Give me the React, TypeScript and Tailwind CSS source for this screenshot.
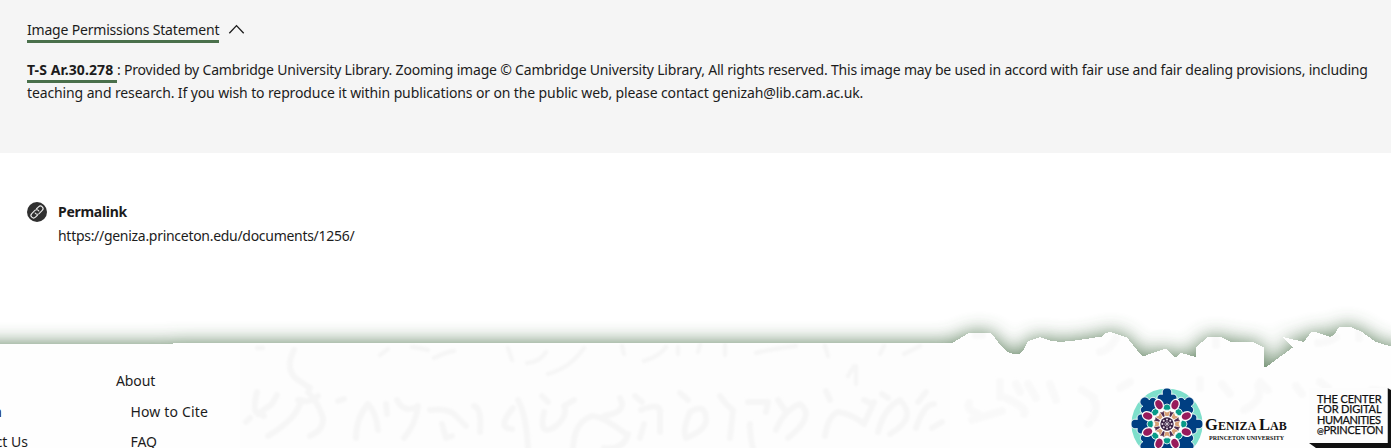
const EDGE =
  'M-40 344H173V343H952L969 333H991L1002 347L1008 352L1012 353.5H1020L1023 351L1028 341L1040 337L1050 340.5L1060 342L1075 340.5L1102 336.5L1106 333L1110 332L1127 337.5L1141 355L1143 356.7L1147 355L1164 349H1166L1174 356.5H1177L1181 353L1196 357V347L1208 337H1221L1231 342H1253L1263.5 347V367L1267 366.5L1292 348L1293 347L1283 338V337L1304 342L1311 332H1316L1330 337L1334 335L1339 327H1351L1362 332L1376 342L1391 346.5L1440 350V520H-40Z'

const STROKES = [
  'M294 350Q284 370 298 380L310 388M308 392Q318 402 323 418Q324 430 310 436',
  'M257 392Q253 408 256 412L264 416M277 395L272 404L258 414M246 422L250 418M301 400Q298 418 268 436',
  'M298 400Q310 404 318 396M338 401L344 399M356 438Q356 418 368 404Q376 412 378 430M386 404L387 414M397 400Q404 414 418 406M418 406Q416 424 404 438M430 410Q446 408 454 414L466 426M442 424L446 438L452 436',
  'M474 406Q482 408 480 432M518 400Q526 414 528 448M513 408Q496 428 512 429M542 396L548 402M544 412Q538 438 556 426Q568 416 564 406L574 400M573 448Q574 422 592 416Q602 416 626 434M620 398Q628 412 604 416M628 434Q624 450 604 448',
  'M635 396L642 402M641 410Q660 402 660 412V432M644 424L640 438M680 393L688 400M690 412Q682 430 686 438M690 412Q706 402 706 420Q706 430 686 438M720 396L726 404L733 410L730 438M748 402L768 402L766 412M750 424Q750 438 753 448',
  'M778 400L786 412M776 430Q784 410 800 404Q816 416 788 438M826 391L830 400M825 436Q828 416 838 412Q852 414 864 424L874 402M864 400L872 404M882 394L888 398M878 432Q884 408 900 400Q918 418 890 434M918 402L926 392M916 428Q924 404 934 404M932 428L942 422',
]

const SMALL = [
  'M527 363Q540 362 546 352M548 374Q570 368 584 348M644 361Q660 356 666 347M756 353Q770 349 796 346M825 346L828 356M884 346L880 354M904 354L920 346M380 355L388 349M412 347Q420 348 428 350M434 358Q446 352 454 351M508 348L512 360M622 346L624 354M678 347V354M700 345L698 352M725 345V355M848 376L854 366M856 366V384M257 348H263',
]

const FAINT = [
  'M969 403Q966 410 978 414M1000 382V397M1016 384L1020 392M1006 398Q1028 408 1024 414M972 420L1002 411M1028 384L1036 398M1050 384L1056 400M1082 390L1094 398M1088 424Q1100 412 1094 400',
  'M1222 384L1230 394M1258 386Q1264 400 1244 410M1260 382L1268 390M1296 386L1302 394M1320 382L1328 388M1372 390L1390 392M1130 382L1120 388M1200 380V388',
  'M1100 352Q1110 350 1116 338M1216 340V345M1318 343Q1330 342 1336 337M1359 333V338M976 335H982',
]

const EIGHT = [0, 45, 90, 135, 180, 225, 270, 315]

function TornEdge() {
  return (
    <svg className="pointer-events-none absolute left-0 top-0" width="1391" height="148" viewBox="0 300 1391 148" overflow="visible" aria-hidden="true">
      <defs>
        <filter id="glow" x="-5%" y="-30%" width="110%" height="160%" filterUnits="objectBoundingBox">
          <feGaussianBlur stdDeviation="10" />
        </filter>
        <filter id="ink"><feGaussianBlur stdDeviation="1" /></filter>
        <clipPath id="paper"><path d={EDGE} /></clipPath>
      </defs>
      <path d={EDGE} fill="#4a704a" opacity="0.88" filter="url(#glow)" />
      <path d={EDGE} fill="#fefefe" shapeRendering="crispEdges" />
      <g clipPath="url(#paper)">
        <path d="M240 345H950V448H240Z" fill="#fdfdfd" />
        <g fill="none" stroke="#f6f6f6" strokeWidth="6" strokeLinecap="round" strokeLinejoin="round" filter="url(#ink)">
          {STROKES.map((d) => <path key={d} d={d} />)}
          {SMALL.map((d) => <path key={d} d={d} strokeWidth="4.5" />)}
          {FAINT.map((d) => <path key={d} d={d} stroke="#f9f9f9" strokeWidth="8" />)}
        </g>
      </g>
    </svg>
  )
}

function Rosette() {
  return (
    <svg className="shrink-0" width="74" height="74" viewBox="-37 -37 74 74" aria-hidden="true">
      <circle r="35.6" fill="#7edfcb" />
      {EIGHT.map((a) => (
        <path
          key={a}
          transform={`rotate(${a})`}
          d="M0 -36C3.4 -36 5.4 -33.6 4.6 -29.6C7.6 -30.6 10 -28.6 10 -26C10 -23.6 8.4 -22.6 7.8 -21L6 -13H-6L-7.8 -21C-8.4 -22.6 -10 -23.6 -10 -26C-10 -28.6 -7.6 -30.6 -4.6 -29.6C-5.4 -33.6 -3.4 -36 0 -36Z"
          fill="#003f82"
          stroke="#fff"
          strokeWidth="0.9"
        />
      ))}
      <circle r="16.5" fill="#fff" />
      {EIGHT.map((a) => (
        <g key={a} transform={`rotate(${a})`}>
          <path d="M-4 -15.5L-2.8 -19Q0 -21 2.8 -19L4 -15.5L2 -13.8H-2Z" fill="#079b88" stroke="#fff" strokeWidth=".8" />
          <path d="M-3.2 -13L-1.6 -8H1.6L3.2 -13L0 -11.6Z" fill="#d8a279" />
        </g>
      ))}
      {EIGHT.map((a) => (
        <g key={a} transform={`rotate(${a + 22.5})`}>
          <ellipse cy="-20.9" rx="4.1" ry="5.4" fill="#981b5c" stroke="#fff" strokeWidth="1.3" />
          <path d="M-1.8 -13.6L0 -12.4L1.8 -13.6L.8 -8H-.8Z" fill="#512b4d" />
        </g>
      ))}
      <circle r="6.7" fill="#3b2345" />
      {EIGHT.map((a) => <circle key={a} transform={`rotate(${a})`} cy="-4.6" r="1" fill="#e8dbe6" />)}
      <path d="M0 -3V3M-3 0H3M-2 -2L2 2M2 -2L-2 2" stroke="#f0e7ee" strokeWidth=".6" />
    </svg>
  )
}

export default function App() {
  return (
    <div className="flex h-[448px] w-[1391px] flex-col overflow-hidden bg-white font-['Noto_Sans',sans-serif] text-[14px] text-[#1c1c1c]">
      <section className="relative z-10 h-[153px] bg-[#f5f5f5] pl-[27px] pt-[19px]">
        <div className="flex h-[24px] items-start">
          <span className="h-[24px] w-[192px] whitespace-nowrap border-b-3 border-[#4a704b] leading-[22px] tracking-[-0.19px]">Image Permissions Statement</span>
          <svg className="ml-[9px] mt-[5px]" width="17" height="11" viewBox="0 0 17 11" fill="none" stroke="#1c1c1c" strokeWidth="1.3">
            <path d="M1.3 9.2L8.5 1.6L15.7 9.2" />
          </svg>
        </div>
        <p className="mt-[16px] whitespace-nowrap leading-[22px]">
          <span className="inline-block h-[24px] w-[90px] border-b-3 border-[#4a704b] align-top font-bold tracking-[0.1px]">T-S Ar.30.278</span>
          <span className="inline-block align-top tracking-[-0.187px]">: Provided by Cambridge University Library. Zooming image © Cambridge University Library, All rights reserved. This image may be used in accord with fair use and fair dealing provisions, including</span>
        </p>
        <p className="-mt-[2px] whitespace-nowrap leading-[23px] tracking-[-0.118px]">teaching and research. If you wish to reproduce it within publications or on the public web, please contact genizah@lib.cam.ac.uk.</p>
      </section>

      <section className="relative z-10 flex h-[147px] shrink-0 gap-[11px] pl-[27px] pt-[47px]">
        <svg className="mt-[2px]" width="20" height="20" viewBox="0 0 20 20" fill="none">
          <circle cx="10" cy="10" r="10" fill="#303030" />
          <g stroke="#ededed" strokeWidth="1.1" strokeLinecap="round" transform="rotate(-45 10 10)">
            <path d="M8 12.6H5.2a2.6 2.6 0 0 1 0-5.2H9.6a2.6 2.6 0 0 1 2.4 3.2" />
            <path d="M12 7.4H14.8a2.6 2.6 0 0 1 0 5.2H10.4a2.6 2.6 0 0 1-2.4-3.2" />
          </g>
        </svg>
        <div className="whitespace-nowrap leading-[24px]">
          <h2 className="font-bold tracking-[-0.28px]">Permalink</h2>
          <p className="tracking-[-0.29px]">https://geniza.princeton.edu/documents/1256/</p>
        </div>
      </section>

      <footer className="relative h-[148px] shrink-0">
        <TornEdge />
        <div className="relative flex h-full items-start">
          <div className="flex w-[116px] flex-col pt-[97px] leading-[30px]">
            <span className="flex w-[2px] justify-end whitespace-nowrap">Search</span>
            <span className="flex w-[28px] justify-end whitespace-nowrap">Contact Us</span>
          </div>
          <nav className="w-[1014px] whitespace-nowrap pt-[66px] leading-[30px]">
            <h3 className="tracking-[-0.1px]">About</h3>
            <ul className="pl-[14.5px] pt-px">
              <li className="tracking-[0.15px]">How to Cite</li>
              <li className="tracking-[-0.1px]">FAQ</li>
            </ul>
          </nav>
          <div className="flex w-[179px] shrink-0 pt-[87px]">
            <Rosette />
            <div className="ml-px whitespace-nowrap pt-[29px] font-['Liberation_Serif',serif] font-bold text-[#111]">
              <div className="text-[12px] leading-[18px] tracking-[0.1px]">
                <span className="text-[16.5px]">G</span>ENIZA <span className="text-[16.5px]">L</span>AB
              </div>
              <div className="pl-[4px] text-[6px] leading-[7px]">PRINCETON UNIVERSITY</div>
            </div>
          </div>
          <div className="relative h-[60px] w-[82px] shrink-0 self-end">
            <svg className="absolute left-0 top-0" width="82" height="60" viewBox="0 0 82 60">
              <path d="M78.5 0L82 2V60H7L0 55H78.5Z" fill="#111" />
              <path d="M0 0H78.5V55H0Z" fill="#fdfdfd" />
            </svg>
            <div className="relative flex flex-col whitespace-nowrap pl-[8px] pt-[6px] font-['Lato',sans-serif] text-[11px] leading-[10.4px] text-[#111] [-webkit-text-stroke:0.25px_#111]">
              <span className="tracking-[-0.15px]">THE CENTER</span>
              <span className="tracking-[-0.15px]">FOR DIGITAL</span>
              <span className="tracking-[-0.4px]">HUMANITIES</span>
              <span className="tracking-[-0.25px]"><span className="text-[8px]">@</span>PRINCETON</span>
            </div>
          </div>
        </div>
      </footer>
    </div>
  )
}
